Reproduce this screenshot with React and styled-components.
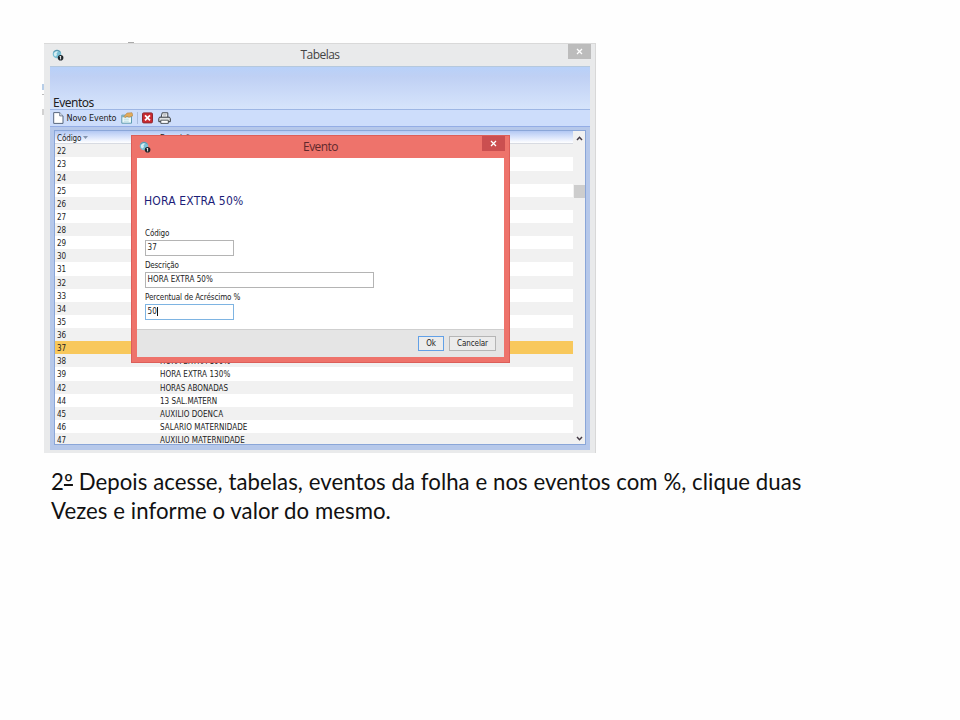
import React from "react";
import styled, { createGlobalStyle } from "styled-components";

const GlobalStyle = createGlobalStyle`
  * { box-sizing: border-box; }
  body { margin: 0; background: #fefefe; }
`;

const Slide = styled.main`
  position: relative;
  width: 960px;
  height: 720px;
  padding: 43px 0 0 44px;
  overflow: hidden;
  background: #fefefe;
  color: #222;
  font-family: "DejaVu Sans Condensed", "DejaVu Sans", sans-serif;
  font-stretch: condensed;
  font-size: 8px;
  white-space: nowrap;
`;

const Smudge = styled.i`
  position: absolute;
  left: ${(p) => p.$x}px;
  top: ${(p) => p.$y}px;
  width: ${(p) => p.$w}px;
  height: ${(p) => p.$h}px;
  background: ${(p) => p.$color};
`;

const Window = styled.section`
  position: relative;
  display: flex;
  flex-direction: column;
  width: 552px;
  height: 410px;
  padding: 0 5px 3px 6px;
  background: #e9eaeb;
  border-top: 1px solid #d9d9d9;
  border-right: 1px solid #d8d8d8;
`;

const TitleBar = styled.header`
  position: relative;
  display: flex;
  align-items: center;
  justify-content: center;
  flex: none;
  height: 22px;
  padding-bottom: 1px;
  font: 12px "Open Sans", sans-serif;
  letter-spacing: -0.55px;
  color: ${(p) => p.$color};
  svg.globe { position: absolute; left: 2px; top: 5px; }
`;

const CloseButton = styled.button`
  position: absolute;
  right: -1px;
  top: 0;
  display: grid;
  place-items: center;
  width: 23px;
  height: 15px;
  padding: 0;
  border: 0;
  background: ${(p) => p.$color};
`;

const Client = styled.div`
  display: flex;
  flex-direction: column;
  flex: 1;
  min-height: 0;
  background: #b6c8ea;
  border-top: 1px solid #b5c8dd;
`;

const Heading = styled.h1`
  display: flex;
  align-items: flex-end;
  flex: none;
  height: 42px;
  margin: 0;
  padding: 0 0 0 3px;
  background: linear-gradient(#b8d1f9, #bfd0f4 22%, #d6e4fb);
  font: 12px/13px "Noto Sans", sans-serif;
  letter-spacing: -0.5px;
  color: #222;
`;

const Toolbar = styled.nav`
  display: flex;
  align-items: center;
  flex: none;
  height: 18px;
  padding-left: 3px;
  background: #cdddfb;
  border-top: 1px solid #9db6e4;
  border-bottom: 1px solid #94ade5;
  font-size: 9px;
  svg { flex: none; }
`;

const ToolLabel = styled.span`
  width: 51px;
  margin: 0 3px 0 2.5px;
  letter-spacing: -0.15px;
`;

const ToolDivider = styled.i`
  width: 1px;
  height: 12px;
  margin: 0 4px;
  background: #a8bbdc;
`;

const PrintButton = styled.span`
  display: flex;
  margin-left: 5px;
`;

const Grid = styled.div`
  display: flex;
  flex: 1;
  min-height: 0;
  margin: 3px 4px 5px 4px;
  border: 1px solid #8aa6d8;
  background: #fff;
  overflow: hidden;
`;

const Table = styled.div`
  flex: 1;
  overflow: hidden;
`;

const HeadRow = styled.div`
  display: flex;
  align-items: center;
  height: 13.3px;
  padding: 2px 0 0 2px;
  background: linear-gradient(#b3c8f3, #d9e4fb 50%, #fff);
  border-bottom: 1px solid #d8dbe2;
  svg { margin: 0 0 1px 2px; }
`;

const HeadCell = styled.span`
  width: ${(p) => p.$width}px;
  letter-spacing: -0.12px;
`;

const Row = styled.div`
  display: flex;
  align-items: center;
  height: 13.136px;
  padding: 2px 0 0 2px;
  background: ${(p) => (p.$selected ? "#f8c85c" : p.$striped ? "#f1f1f1" : "#fff")};
`;

const Code = styled.span`
  width: 103px;
  letter-spacing: -0.1px;
`;

const Name = styled.span`
  letter-spacing: ${(p) => p.$spacing}px;
`;

const Scrollbar = styled.div`
  display: flex;
  flex-direction: column;
  align-items: center;
  width: 12px;
  padding: 5px 0 3px;
  background: #f1f1f1;
`;

const Thumb = styled.i`
  width: 11px;
  height: 13px;
  margin: 44px 0 auto;
  background: #cdcdcd;
`;

const Dialog = styled.section`
  position: absolute;
  left: 87px;
  top: 91px;
  display: flex;
  flex-direction: column;
  width: 379px;
  height: 228px;
  padding: 0 5px 5px;
  background: #ee736b;
  border: 1px solid #dc5e59;
`;

const Form = styled.div`
  display: flex;
  flex-direction: column;
  align-items: flex-start;
  flex: 1;
  padding: 36px 0 0 8px;
  background: #fff;
`;

const FormTitle = styled.h2`
  height: 15px;
  margin: 0 0 19px -1px;
  font: 12px/15px "DejaVu Sans Condensed", "DejaVu Sans", sans-serif;
  font-stretch: condensed;
  letter-spacing: 0.18px;
  color: #1d1d78;
`;

const Label = styled.label`
  height: 12px;
  line-height: 12px;
  letter-spacing: ${(p) => p.$spacing}px;
`;

const Field = styled.div`
  display: flex;
  align-items: center;
  width: ${(p) => p.$width}px;
  height: 16px;
  margin-bottom: 4px;
  padding: 0 0 1px 1.5px;
  background: #fff;
  border: 1px solid ${(p) => (p.$focused ? "#7eb4e2" : "#b4b4b4")};
  letter-spacing: 0.06px;
`;

const Caret = styled.i`
  width: 1px;
  height: 9px;
  background: #111;
`;

const Footer = styled.footer`
  display: flex;
  align-items: flex-start;
  justify-content: flex-end;
  gap: 5px;
  height: 28px;
  padding: 6px 8px 0 0;
  background: #e5e5e5;
  border-top: 1px solid #cfcfcf;
`;

const Button = styled.button`
  width: ${(p) => p.$width}px;
  height: 15px;
  padding: 0;
  border: 1px solid ${(p) => (p.$primary ? "#62a0e6" : "#b5b5b5")};
  background: #ececec;
  color: #222;
  font: inherit;
  line-height: 12px;
  letter-spacing: -0.1px;
`;

const Caption = styled.p`
  margin: 14px 0 0 7px;
  font: 22.2px/29px Lato, sans-serif;
  color: #111;
`;

const CaptionLine = styled.span`
  display: block;
  letter-spacing: ${(p) => p.$spacing}px;
`;

const Ordinal = styled.span`
  text-decoration: underline;
  text-decoration-thickness: 1.5px;
  text-underline-offset: -6px;
  text-decoration-skip-ink: none;
`;

const Globe = () => (
  <svg className="globe" width="12" height="12" viewBox="0 0 12 12">
    <circle cx="5" cy="5" r="4.3" fill="#79bfd4" />
    <path d="M2 4Q4 1.5 6 2.5L4.5 4.5 5 6 3.5 7.5Q1.5 7 2 4" fill="#d6edf2" />
    <path d="M1.3 3.2Q5-.6 8.7 3.2" fill="none" stroke="#5b93aa" />
    <circle cx="8.6" cy="8.7" r="2.8" fill="#20262b" />
    <path d="M8.6 7v3.4M7.8 7.8l.8-.8" stroke="#fff" strokeWidth=".9" />
  </svg>
);

const Cross = () => (
  <svg width="7" height="7" viewBox="0 0 7 7">
    <path d="M1 1l5 5M6 1L1 6" stroke="#fff" strokeWidth="1.3" />
  </svg>
);

const PageIcon = () => (
  <svg width="11" height="12" viewBox="0 0 11 12">
    <path d="M.7.6h6l3.3 3.3v7.5H.7z" fill="#fff" stroke="#57667f" />
    <path d="M6.7.6v3.3H10" fill="#dce4ef" stroke="#57667f" strokeWidth=".8" />
  </svg>
);

const EditIcon = () => (
  <svg width="12" height="12" viewBox="0 0 12 12">
    <path d="M.8 3.2h9.7v8H.8z" fill="#eefafa" stroke="#5f9bb0" />
    <path d="M1 3.3h9.5v2H1z" fill="#7db2bf" />
    <path d="M3 4.5L6 1l5-.3 1 3-4 1.6-2-1-2 1.4z" fill="#e2ab5a" stroke="#ab7c40" strokeWidth=".5" />
    <path d="M2.8 7.2h5M2.8 9.2h5" stroke="#b9dce2" />
  </svg>
);

const DeleteIcon = () => (
  <svg width="11" height="12" viewBox="0 0 11 12">
    <rect x=".5" y=".9" width="10" height="10" rx="1.2" fill="#c9282f" stroke="#8f2830" />
    <path d="M3 3.4l5 5M8 3.4l-5 5" stroke="#fff" strokeWidth="1.8" />
  </svg>
);

const PrinterIcon = () => (
  <svg width="13" height="12" viewBox="0 0 13 12">
    <path d="M3.2 5.2L4.2.8h5.6v4.4" fill="#fff" stroke="#3e4349" />
    <path d="M5.2 2.4h3.3M5 3.8h3.3" stroke="#8a9098" strokeWidth=".6" />
    <path d="M1.5 5.2h10l.8 1.4v3.1H.8V6.6z" fill="#dfe2e2" stroke="#34383c" />
    <path d="M2.8 8.2h7.5v3.2H2.8z" fill="#fff" stroke="#34383c" strokeWidth=".8" />
  </svg>
);

const Chevron = ({ up }) => (
  <svg width="7" height="5" viewBox="0 0 7 5">
    <path d={up ? "M1 4l2.5-2.7L6 4" : "M1 1l2.5 2.7L6 1"} fill="none" stroke="#453b45" strokeWidth="1.5" />
  </svg>
);

const events = [
  ...Array.from({ length: 16 }, (_, i) => ({ code: 22 + i })),
  { code: 38, name: "HORA EXTRA 100%", spacing: 0.08 },
  { code: 39, name: "HORA EXTRA 130%", spacing: 0.08 },
  { code: 42, name: "HORAS ABONADAS", spacing: 0 },
  { code: 44, name: "13 SAL.MATERN", spacing: 0 },
  { code: 45, name: "AUXILIO DOENCA", spacing: 0.05 },
  { code: 46, name: "SALARIO MATERNIDADE", spacing: 0.06 },
  { code: 47, name: "AUXILIO MATERNIDADE", spacing: 0.06 },
];

export default function App() {
  return (
    <Slide>
      <GlobalStyle />
      <Smudge $x={128} $y={42} $w={6} $h={1} $color="#aaa" />
      <Smudge $x={42} $y={84} $w={2} $h={6} $color="#b8cee8" />
      <Smudge $x={42} $y={94} $w={2} $h={1} $color="#bbb" />
      <Smudge $x={42} $y={109} $w={2} $h={6} $color="#d2d2d2" />
      <Window>
        <TitleBar $color="#444">
          <Globe />
          Tabelas
          <CloseButton $color="#bcbcbc" aria-label="Fechar"><Cross /></CloseButton>
        </TitleBar>
        <Client>
          <Heading>Eventos</Heading>
          <Toolbar>
            <PageIcon />
            <ToolLabel>Novo Evento</ToolLabel>
            <EditIcon />
            <ToolDivider />
            <DeleteIcon />
            <PrintButton><PrinterIcon /></PrintButton>
          </Toolbar>
          <Grid>
            <Table>
              <HeadRow>
                <HeadCell $width={103}>
                  Código
                  <svg width="5" height="4" viewBox="0 0 5 4"><path d="M0 0h5L2.5 3z" fill="#8494ae" /></svg>
                </HeadCell>
                <HeadCell $width={60}>Descrição</HeadCell>
              </HeadRow>
              {events.map((e, i) => (
                <Row key={e.code} $striped={i % 2 === 0} $selected={e.code === 37}>
                  <Code>{e.code}</Code>
                  <Name $spacing={e.spacing}>{e.name}</Name>
                </Row>
              ))}
            </Table>
            <Scrollbar>
              <Chevron up />
              <Thumb />
              <Chevron />
            </Scrollbar>
          </Grid>
        </Client>
        <Dialog>
          <TitleBar $color="#60282b">
            <Globe />
            Evento
            <CloseButton $color="#cb4f50" aria-label="Fechar"><Cross /></CloseButton>
          </TitleBar>
          <Form>
            <FormTitle>HORA EXTRA 50%</FormTitle>
            <Label $spacing={-0.1}>Código</Label>
            <Field $width={89}>37</Field>
            <Label $spacing={-0.2}>Descrição</Label>
            <Field $width={229}>HORA EXTRA 50%</Field>
            <Label $spacing={-0.1}>Percentual de Acréscimo %</Label>
            <Field $width={89} $focused>50<Caret /></Field>
          </Form>
          <Footer>
            <Button $width={26} $primary>Ok</Button>
            <Button $width={47}>Cancelar</Button>
          </Footer>
        </Dialog>
      </Window>
      <Caption>
        <CaptionLine $spacing={0.06}>
          2<Ordinal>º</Ordinal> Depois acesse, tabelas, eventos da folha e nos eventos com %, clique duas
        </CaptionLine>
        <CaptionLine $spacing={0.06}>Vezes e informe o valor do mesmo.</CaptionLine>
      </Caption>
    </Slide>
  );
}
